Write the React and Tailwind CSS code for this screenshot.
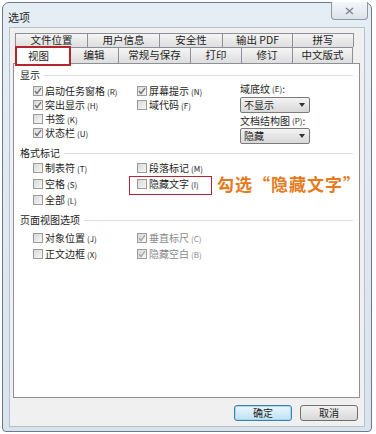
import React from "react";

const FONT = { fontFamily: '"Noto Sans CJK SC", "Noto Sans", sans-serif' };

// 复选框
function Box({ checked, disabled }) {
  return (
    <span className="w-[10px] h-[10px] shrink-0 border border-[#9a9a9a] bg-gradient-to-br from-[#d9d9d9] to-[#f7f7f7] flex items-center justify-center">
      {checked && (
        <svg width="8" height="8" viewBox="0 0 8 8">
          <polyline points="1,4 3,6.5 7,1.2" fill="none" stroke={disabled ? "#a8a8a8" : "#767676"} strokeWidth="1.4" />
        </svg>
      )}
    </span>
  );
}

function Check({ label, acc, checked, disabled }) {
  return (
    <div className="flex items-center gap-[2px] whitespace-nowrap">
      <Box checked={checked} disabled={disabled} />
      <span className={`text-[10px] leading-none ${disabled ? "text-[#8a8a8a]" : "text-[#1e1e1e]"}`}>
        {label}
        <span className="text-[8px] ml-[2px]">({acc})</span>
      </span>
    </div>
  );
}

function Header({ title }) {
  return (
    <div className="h-[14px] flex items-center pl-[6px] pr-[6px]">
      <span className="text-[10px] leading-none text-[#1e1e1e]">{title}</span>
      <div className="flex-1 h-px bg-[#d8dde2] ml-[4px]" />
    </div>
  );
}

function Select({ value }) {
  return (
    <div className="w-[70px] h-[16px] border border-[#7a7a7a] rounded-[2px] bg-gradient-to-b from-[#f3f3f3] to-[#d8d8d8] flex items-center justify-between pl-[3px] pr-[4px]">
      <span className="text-[10px] leading-none text-[#1e1e1e]">{value}</span>
      <svg width="6" height="4" viewBox="0 0 6 4">
        <polygon points="0,0 6,0 3,4" fill="#333" />
      </svg>
    </div>
  );
}

const row1 = [
  ["文件位置", 73],
  ["用户信息", 73],
  ["安全性", 64],
  ["输出 PDF", 71],
  ["拼写", 62],
];
const row2 = [
  ["编辑", 50],
  ["常规与保存", 73],
  ["打印", 52],
  ["修订", 52],
  ["中文版式", 61],
];

export default function App() {
  return (
    <div className="w-[376px] h-[434px] bg-white pl-[2px] pt-[2px]" style={FONT}>
      <div className="w-[370px] h-[430px] border border-[#6b7a8a] rounded-t-[7px] rounded-b-[4px] bg-gradient-to-b from-[#e6eef5] to-[#d9e3ec] flex flex-col px-[6px] pb-[4px]">
        {/* 标题栏 */}
        <div className="h-[24px] flex justify-between">
          <span className="text-[11px] text-[#1e1e1e] mt-[6px] -ml-[1px]">选项</span>
          <div className="w-[37px] h-[18px] -mr-[3px] -mt-px border border-[#8a97a5] border-t-0 rounded-b-[4px] bg-gradient-to-b from-[#f4f7fa] to-[#dbe3ea] flex items-center justify-center">
            <svg width="9" height="8" viewBox="0 0 9 8">
              <path d="M1 1 L8 7 M8 1 L1 7" stroke="#7d8894" strokeWidth="1.5" />
            </svg>
          </div>
        </div>

        {/* 客户区 */}
        <div className="flex-1 bg-[#f0f0f0] border border-[#b5c0ca] flex flex-col pt-[5px] px-[3px]">
          {/* 选项卡 */}
          <div className="ml-[2px] w-[343px] flex h-[14px]">
            {row1.map(([t, w]) => (
              <div
                key={t}
                style={{ width: w }}
                className="h-full border border-[#8e9097] border-b-0 -mr-px bg-gradient-to-b from-[#f5f5f5] to-[#dedede] flex items-center justify-center text-[10.5px] leading-none text-[#1e1e1e]"
              >
                {t}
              </div>
            ))}
          </div>
          <div className="ml-[2px] w-[343px] flex h-[16px] items-end relative z-10">
            <div className="relative w-[55px] h-[17px] -mb-px bg-white border border-[#8e9097] border-b-0 flex items-center pl-[12px] text-[10.5px] leading-none text-[#1e1e1e]">
              视图
              <div className="absolute -left-[1px] -top-[2px] w-[56px] h-[20px] border-2 border-[#b3262d]" />
            </div>
            {row2.map(([t, w]) => (
              <div
                key={t}
                style={{ width: w }}
                className="h-full border border-[#8e9097] border-b-0 -ml-px bg-gradient-to-b from-[#f5f5f5] to-[#dedede] flex items-center justify-center text-[10.5px] leading-none text-[#1e1e1e]"
              >
                {t}
              </div>
            ))}
          </div>

          {/* 内容面板 */}
          <div className="w-[347px] h-[335px] border border-[#8e9097] bg-white flex flex-col pt-[4px]">
            <Header title="显示" />
            <div className="flex pl-[19px]">
              <div className="grid grid-cols-[104px_103px] auto-rows-[14px] mt-[2px] items-center">
                <Check label="启动任务窗格" acc="R" checked />
                <Check label="屏幕提示" acc="N" checked />
                <Check label="突出显示" acc="H" checked />
                <Check label="域代码" acc="F" />
                <Check label="书签" acc="K" />
                <div />
                <Check label="状态栏" acc="U" checked />
              </div>
              <div className="flex flex-col">
                <div className="h-[14px] flex items-center text-[10px] leading-none text-[#1e1e1e]">
                  域底纹<span className="text-[8px] ml-[2px]">(E)</span>:
                </div>
                <div className="mt-px">
                  <Select value="不显示" />
                </div>
                <div className="h-[14px] mt-px flex items-center text-[10px] leading-none text-[#1e1e1e]">
                  文档结构图<span className="text-[8px] ml-[2px]">(P)</span>:
                </div>
                <Select value="隐藏" />
              </div>
            </div>

            <div className="mt-[2px]">
              <Header title="格式标记" />
            </div>
            <div className="grid grid-cols-[104px_103px_1fr] auto-rows-[16px] items-center pl-[19px]">
              <Check label="制表符" acc="T" />
              <Check label="段落标记" acc="M" />
              <div />
              <Check label="空格" acc="S" />
              <div className="relative h-full flex items-center">
                <Check label="隐藏文字" acc="I" />
                <div className="absolute -left-[8px] top-0 w-[83px] h-[19px] border-[1.5px] border-[#b3263a]" />
              </div>
              <div className="-ml-[23px] whitespace-nowrap text-[17px] leading-[16px] tracking-[1px] font-bold text-[#e57b1c]">
                勾选“隐藏文字”
              </div>
              <Check label="全部" acc="L" />
            </div>

            <div className="mt-[5px]">
              <Header title="页面视图选项" />
            </div>
            <div className="grid grid-cols-[104px_103px] auto-rows-[16px] items-center pl-[19px] mt-[3px]">
              <Check label="对象位置" acc="J" />
              <Check label="垂直标尺" acc="C" checked disabled />
              <Check label="正文边框" acc="X" />
              <Check label="隐藏空白" acc="B" checked disabled />
            </div>
          </div>

          {/* 按钮 */}
          <div className="flex justify-end gap-[8px] mt-[7px] pr-[3px]">
            <button className="w-[58px] h-[16px] rounded-[3px] border border-[#3c7fb1] bg-gradient-to-b from-[#eaf6fd] to-[#bee2f6] shadow-[inset_0_0_0_1px_#a7d8f2] text-[10px] leading-none text-[#1e1e1e]">
              确定
            </button>
            <button className="w-[58px] h-[16px] rounded-[3px] border border-[#707070] bg-gradient-to-b from-[#f2f2f2] to-[#d8d8d8] text-[10px] leading-none text-[#1e1e1e]">
              取消
            </button>
          </div>
        </div>
      </div>
    </div>
  );
}
